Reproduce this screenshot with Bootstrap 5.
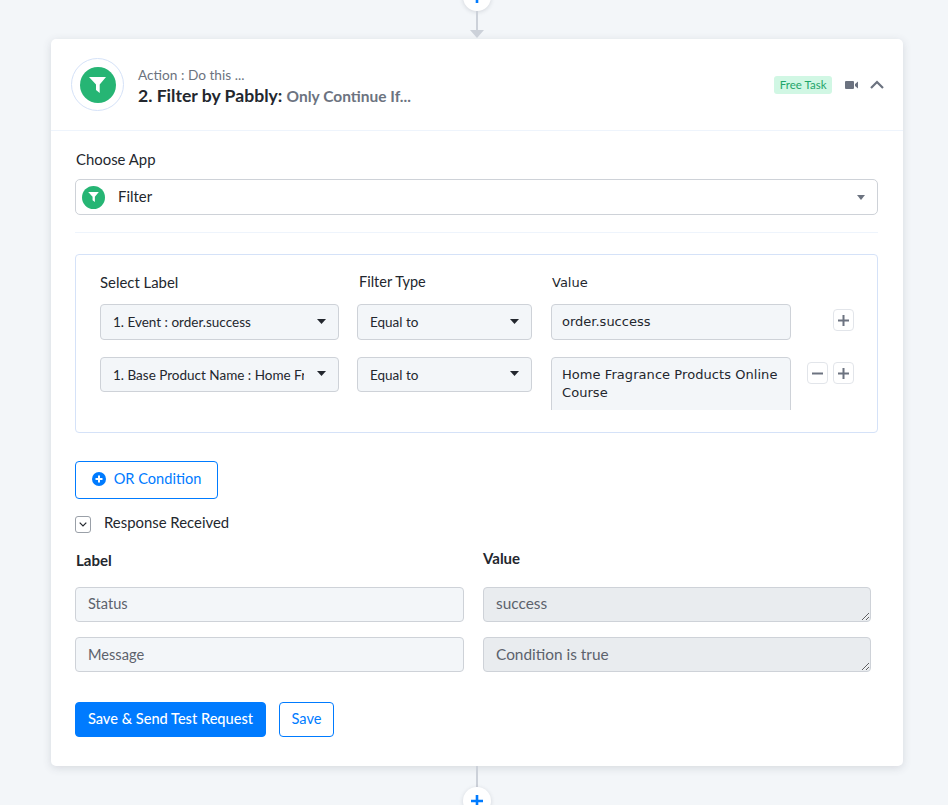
<!DOCTYPE html>
<html lang="en">
<head>
<meta charset="UTF-8" />
<meta name="viewport" content="width=device-width, initial-scale=1.0" />
<title>Filter by Pabbly</title>
<link href="https://cdn.jsdelivr.net/npm/bootstrap@5.3.0/dist/css/bootstrap.min.css" rel="stylesheet" />
<style>
html, body { height: 805px; overflow: hidden; }
body { background: #f3f6f9; font-family: "Lato", sans-serif; font-size: 14.9px; color: #23272e; }
.flow-wrap { width: 852px; margin-left: 51px; }
.add-dot { display: flex; align-items: center; justify-content: center; width: 28px; height: 28px; flex: none; border-radius: 50%; background: #fff; box-shadow: 0 1px 4px rgba(60,70,90,.18); }
.top-dot { margin-top: -17px; }
.link-line { width: 2px; background: #ccd1d9; }
.top-line { height: 19px; }
.bottom-line { height: 21px; }
.link-arrow { width: 0; height: 0; margin-bottom: 1px; border-left: 7px solid transparent; border-right: 7px solid transparent; border-top: 8px solid #ccd1d9; }
.step-card { height: 727px; background: #fff; border-radius: 5px; box-shadow: 0 2px 8px rgba(60,70,90,.16); }
.step-head { height: 92px; padding: 0 19px 0 20px; border-bottom: 1px solid #eef4fc; }
.app-ring { width: 53px; height: 53px; border: 1px solid #d5e2f8; border-radius: 50%; }
.app-dot { display: flex; align-items: center; justify-content: center; width: 36px; height: 36px; border-radius: 50%; background: #26b574; }
.app-dot.dot-sm { width: 23px; height: 23px; }
.step-titles { margin-left: 14px; padding-top: 4px; }
.step-kicker { font-size: 13.7px; line-height: 18px; color: #6c7380; }
.step-title { font-size: 17.6px; line-height: 24px; font-weight: 700; color: #23272e; }
.step-title span { font-size: 15.5px; color: #6c7380; }
.free-tag { background: #d1f7e4; color: #1fa56a; font-size: 11.5px; line-height: 18px; padding: 0 5.5px; border-radius: 3px; margin-right: 13px; }
.chev-up { margin-left: 12px; }
.step-body { padding: 18px 25px 0 24px; }
.field-label { display: block; line-height: 20px; }
.choose-label { padding-left: 1px; margin-bottom: 10px; }
.app-select { height: 36px; border: 1px solid #ced2d8; border-radius: 5px; padding: 0 12px 0 6px; }
.app-name { margin: -2px 0 0 13px; }
.caret-sm { width: 0; height: 0; border-left: 4.5px solid transparent; border-right: 4.5px solid transparent; border-top: 5px solid #6c7380; }
.soft-rule { height: 1px; background: #eef4fc; margin: 17px 0 21px; }
.filter-box { height: 179px; border: 1px solid #d5e2f8; border-radius: 4px; padding: 18px 0 0 24px; }
.col-label { width: 239px; margin-right: 18px; }
.col-type { width: 175px; margin-right: 19px; }
.col-value { width: 240px; margin-right: 16px; }
.head-up { margin-top: -1px; }
.type-label { padding-left: 2px; font-size: 14.5px; }
.value-label { padding-left: 1px; font-family: "DejaVu Sans", sans-serif; font-size: 13px; }
.filter-row { margin-top: 11px; }
.filter-row + .filter-row { margin-top: 17px; }
.pick { height: 36px; background-color: #f3f6f9; border: 1px solid #ced2d8; border-radius: 4px; font-family: inherit; font-size: 13.5px; color: #23272e; padding: 0 34px 0 12px; background-image: url("data:image/svg+xml,%3Csvg xmlns='http://www.w3.org/2000/svg' width='10' height='5'%3E%3Cpath d='M0 0h10L5 5z' fill='%2323272e'/%3E%3C/svg%3E"); background-position: right 12px top 14px; background-size: 9px 5px; box-shadow: none; }
.pick.pick-short { height: 35px; background-position: right 12px top 13px; padding-top: 2px; }
.value-input { height: 36px; background: #f3f6f9; border: 1px solid #ced2d8; border-radius: 4px; padding: 0 10px 2px; font-family: "DejaVu Sans", sans-serif; font-size: 13px; color: #23272e; }
.value-clip { height: 53px; overflow: hidden; }
.value-area { display: block; width: 100%; height: 70px; resize: none; background: #f3f6f9; border: 1px solid #ced2d8; border-radius: 4px; padding: 8px 10px; font-family: "DejaVu Sans", sans-serif; font-size: 13px; letter-spacing: .06px; line-height: 18px; color: #23272e; }
.filter-actions { width: 47px; margin-top: 5px; gap: 5px; }
.mini-btn { display: flex; align-items: center; justify-content: center; width: 21px; height: 22px; padding: 0; background: #fff; border: 1px solid #e2e5ea; border-radius: 4px; }
.or-btn { width: 143px; height: 38px; margin-top: 28px; padding: 0 0 2px; font-size: 14.6px; border-radius: 4px; --bs-btn-color: #007bff; --bs-btn-border-color: #007bff; }
.resp-line { margin-top: 15px; height: 20px; }
.resp-line span { margin-top: -4px; }
.resp-check { display: flex; align-items: center; justify-content: center; width: 16px; height: 17px; border: 1px solid #9aa0a8; border-radius: 3px; margin-right: 13px; }
.resp-grid { display: grid; grid-template-columns: 389px 388px; column-gap: 19px; }
.resp-head { font-weight: 700; font-size: 15px; line-height: 20px; }
.resp-head-left { margin-top: 16px; padding-left: 1px; }
.resp-head-right { margin-top: 14px; }
.resp-first { margin-top: 17px; }
.resp-second { margin-top: 15px; }
.resp-input { display: block; width: 100%; height: 35px; background: #f3f6f9; border: 1px solid #ced2d8; border-radius: 4px; padding: 0 12px; font-family: inherit; font-size: 14.6px; color: #5c626c; }
.resp-input.resp-first { padding-bottom: 2px; }
.resp-area { display: block; width: 100%; height: 35px; min-height: 35px; background: #e9ecef; border: 1px solid #ced2d8; border-radius: 4px; padding: 5px 12px; font-family: inherit; font-size: 15.4px; line-height: 20px; color: #5c626c; overflow: hidden; }
.resp-area.resp-second { padding-top: 6px; }
.save-row { margin-top: 30px; }
.save-main { width: 191px; height: 35px; padding: 0 0 2px; --bs-btn-bg: #007bff; --bs-btn-border-color: #007bff; font-size: 14.6px; font-weight: 500; border-radius: 4px; }
.save-plain { width: 55px; height: 35px; padding: 0 0 2px; font-size: 14.6px; border-radius: 4px; margin-left: 13px; --bs-btn-color: #007bff; --bs-btn-border-color: #007bff; }
</style>
</head>
<body>
<div class="flow-wrap">
    <div class="d-flex flex-column align-items-center">
        <div class="add-dot top-dot"><svg width="12" height="12" viewBox="0 0 12 12"><path d="M6 0v12M0 6h12" stroke="#007bff" stroke-width="2.600"/></svg></div>
        <div class="link-line top-line"></div>
        <div class="link-arrow"></div>
    </div>

    <div class="step-card">
        <!-- Step header -->
        <div class="step-head d-flex align-items-center">
            <div class="app-ring d-flex align-items-center justify-content-center">
                <div class="app-dot">
                    <svg width="17" height="16" viewBox="0 0 17 16"><path d="M0 0h17l-6.300 7.500V16L7 13V7.500z" fill="#fff"/></svg>
                </div>
            </div>
            <div class="step-titles">
                <div class="step-kicker">Action : Do this ...</div>
                <div class="step-title">2. Filter by Pabbly: <span>Only Continue If...</span></div>
            </div>
            <div class="d-flex align-items-center ms-auto">
                <span class="free-tag">Free Task</span>
                <svg width="13" height="8" viewBox="0 0 13 8"><path d="M0 1a1 1 0 0 1 1-1h7a1 1 0 0 1 1 1v6a1 1 0 0 1-1 1H1a1 1 0 0 1-1-1zM10 3l3-2.500v7L10 5z" fill="#6c7380"/></svg>
                <svg class="chev-up" width="14" height="9" viewBox="0 0 14 9"><path d="M1 8l6-6 6 6" fill="none" stroke="#6c7380" stroke-width="2.200"/></svg>
            </div>
        </div>

        <div class="step-body">
            <label class="field-label choose-label">Choose App</label>
            <div class="app-select d-flex align-items-center">
                <div class="app-dot dot-sm">
                    <svg width="11" height="10" viewBox="0 0 17 16"><path d="M0 0h17l-6.300 7.500V16L7 13V7.500z" fill="#fff"/></svg>
                </div>
                <span class="app-name flex-grow-1">Filter</span>
                <div class="caret-sm"></div>
            </div>
            <div class="soft-rule"></div>

            <!-- Filter conditions -->
            <div class="filter-box">
                <div class="d-flex">
                    <label class="field-label col-label head-up">Select Label</label>
                    <label class="field-label col-type type-label head-up">Filter Type</label>
                    <label class="field-label col-value value-label">Value</label>
                </div>
                <div class="d-flex filter-row">
                    <select class="form-select pick col-label"><option>1. Event : order.success</option></select>
                    <select class="form-select pick col-type"><option>Equal to</option></select>
                    <input class="value-input col-value" type="text" value="order.success" />
                    <div class="d-flex justify-content-end filter-actions">
                        <button class="mini-btn" type="button"><svg width="11" height="11" viewBox="0 0 11 11"><path d="M5.500 0v11M0 5.500h11" stroke="#6c7380" stroke-width="2"/></svg></button>
                    </div>
                </div>
                <div class="d-flex filter-row">
                    <select class="form-select pick pick-short col-label"><option>1. Base Product Name : Home Fragrance Products Online Course</option></select>
                    <select class="form-select pick pick-short col-type"><option>Equal to</option></select>
                    <div class="value-clip col-value">
                        <textarea class="value-area">Home Fragrance Products Online Course</textarea>
                    </div>
                    <div class="d-flex justify-content-end filter-actions">
                        <button class="mini-btn" type="button"><svg width="11" height="11" viewBox="0 0 11 11"><path d="M0 5.500h11" stroke="#6c7380" stroke-width="2"/></svg></button>
                        <button class="mini-btn" type="button"><svg width="11" height="11" viewBox="0 0 11 11"><path d="M5.500 0v11M0 5.500h11" stroke="#6c7380" stroke-width="2"/></svg></button>
                    </div>
                </div>
            </div>

            <button class="btn btn-outline-primary or-btn d-flex align-items-center justify-content-center" type="button">
                <svg class="me-2" width="14" height="14" viewBox="0 0 14 14"><circle cx="7" cy="7" r="7" fill="#007bff"/><path d="M7 3.500v7M3.500 7h7" stroke="#fff" stroke-width="2"/></svg>
                OR Condition
            </button>

            <div class="resp-line d-flex align-items-center">
                <div class="resp-check"><svg width="8" height="5" viewBox="0 0 8 5"><path d="M.7.7L4 4l3.300-3.300" fill="none" stroke="#23272e" stroke-width="1.200"/></svg></div>
                <span>Response Received</span>
            </div>

            <!-- Response values -->
            <div class="resp-grid">
                <div class="resp-head resp-head-left">Label</div>
                <div class="resp-head resp-head-right">Value</div>
                <input class="resp-input resp-first" type="text" value="Status" />
                <textarea class="resp-area resp-first" readonly>success</textarea>
                <input class="resp-input resp-second" type="text" value="Message" />
                <textarea class="resp-area resp-second" readonly>Condition is true</textarea>
            </div>

            <div class="d-flex save-row">
                <button class="btn btn-primary save-main" type="button">Save &amp; Send Test Request</button>
                <button class="btn btn-outline-primary save-plain" type="button">Save</button>
            </div>
        </div>
    </div>

    <div class="d-flex flex-column align-items-center">
        <div class="link-line bottom-line"></div>
        <div class="add-dot"><svg width="12" height="12" viewBox="0 0 12 12"><path d="M6 0v12M0 6h12" stroke="#007bff" stroke-width="2.600"/></svg></div>
    </div>
</div>
<script src="https://cdn.jsdelivr.net/npm/bootstrap@5.3.0/dist/js/bootstrap.bundle.min.js"></script>
</body>
</html>
